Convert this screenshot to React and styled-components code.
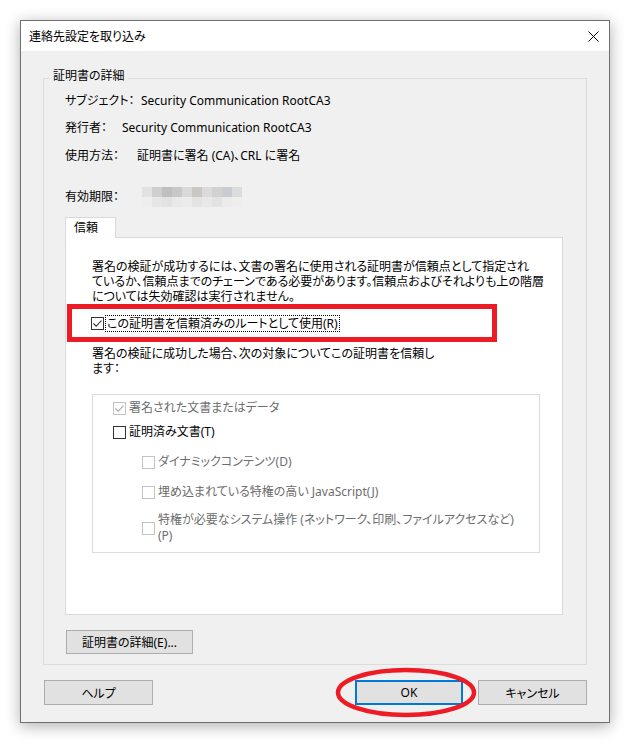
import React from 'react'
import styled, { createGlobalStyle } from 'styled-components'

const GlobalStyle = createGlobalStyle`
  body {
    margin: 0;
    background: #ffffff;
    font-family: "Noto Sans", "Noto Sans CJK JP", sans-serif;
    font-size: 12px;
    color: #000;
  }
  * { box-sizing: border-box; }
`;

const Page = styled.div`
  padding: 20px;
`;

const Window = styled.div`
  width: 590px;
  height: 703px;
  display: flex;
  flex-direction: column;
  background: #f0f0f0;
  border: 1px solid #6f6f6f;
  box-shadow: 0 3px 14px rgba(0, 0, 0, 0.32);
  font-feature-settings: "palt";
`;

const TitleBar = styled.div`
  height: 30px;
  flex: none;
  display: flex;
  align-items: center;
  justify-content: space-between;
  padding: 0 10px 0 8px;
  background: #ffffff;
  font-size: 12px;
`;

const CloseIcon = () => (
  <svg width="11" height="11" viewBox="0 0 11 11">
    <path d="M0.5 0.5 L10.5 10.5 M10.5 0.5 L0.5 10.5" stroke="#000" strokeWidth="1" />
  </svg>
);

const Body = styled.div`
  flex: 1;
  display: flex;
  flex-direction: column;
  padding: 17px 22px 17px 22px;
`;

const GroupBox = styled.fieldset`
  margin: 0;
  min-width: 0;
  border: 1px solid #dcdcdc;
  padding: 0 0 10px 6px;
`;

const Legend = styled.legend`
  padding: 0 3px 4px;
  line-height: 16px;
`;

const GroupContent = styled.div`
  padding: 0 23px 0 15px;
`;

const InfoRow = styled.div`
  display: flex;
  align-items: center;
  line-height: 16px;
  height: ${({ tall }) => (tall ? '20px' : '16px')};
  margin-top: ${({ gap }) => gap}px;
`;

const InfoLabel = styled.span`
  min-width: ${({ w }) => w}px;
`;

const Blur = styled.div`
  display: grid;
  grid-template-columns: repeat(10, 10px);
  grid-auto-rows: 10px;
  margin-left: 1px;
`;

const BlurCell = styled.div`
  background: ${({ c }) => c};
`;

const TabStrip = styled.div`
  margin-top: 10px;
  display: flex;
`;

const Tab = styled.div`
  width: 51px;
  height: 21px;
  margin-bottom: -1px;
  padding: 2px 0 0 8px;
  line-height: 16px;
  background: #ffffff;
  border: 1px solid #d9d9d9;
  border-bottom: none;
  position: relative;
  z-index: 1;
`;

const TabPanel = styled.div`
  background: #ffffff;
  border: 1px solid #d9d9d9;
  padding: 21px 22px 61px 26px;
`;

const Para = styled.p`
  margin: ${({ mt }) => mt}px 0 0;
  line-height: 15px;
  white-space: nowrap;
`;

const Highlight = styled.div`
  margin: 0 0 0 -25px;
  width: 430px;
  height: 38px;
  border: 5px solid #ed1c24;
  padding-left: 19px;
  display: flex;
  align-items: center;
`;

const Box = styled.span`
  flex: none;
  width: 13px;
  height: 13px;
  display: inline-flex;
  align-items: center;
  justify-content: center;
  background: #ffffff;
  border: 1px solid ${({ disabled }) => (disabled ? '#c4c4c4' : '#333333')};
`;

const CheckBox = ({ checked, disabled }) => (
  <Box disabled={disabled}>
    {checked && (
      <svg width="11" height="11" viewBox="0 0 11 11">
        <path
          d="M1.5 5.5 L4.2 8.2 L9.5 2.5"
          fill="none"
          stroke={disabled ? '#a8a8a8' : '#333333'}
          strokeWidth="1.1"
        />
      </svg>
    )}
  </Box>
);

const FocusLabel = styled.span`
  margin-left: 2px;
  padding: 0 1px;
  line-height: 15px;
  outline: 1px dotted #000;
`;

const OptionsBox = styled.div`
  margin-top: 18px;
  width: 448px;
  border: 1px solid #dcdcdc;
  padding: 5px 0 8px 20px;
`;

const Option = styled.div`
  display: flex;
  align-items: center;
  gap: 3px;
  margin-top: ${({ gap }) => gap}px;
  margin-left: ${({ indent }) => (indent ? 29 : 0)}px;
  line-height: 16px;
  color: ${({ disabled }) => (disabled ? '#6d6d6d' : '#000')};
`;

const Button = styled.button`
  width: ${({ w }) => w}px;
  height: ${({ h }) => h || 25}px;
  padding: 0;
  background: #e1e1e1;
  border: 1px solid #adadad;
  border-radius: 0;
  font: inherit;
  font-size: 12px;
  color: #000;
`;

const DetailButton = styled(Button)`
  margin: 15px 0 0 1px;
`;

const Footer = styled.div`
  margin-top: 15px;
  display: flex;
  align-items: center;
  padding: 0 0 0 1px;
`;

const Spacer = styled.div`
  flex: 1;
`;

const OkWrap = styled.div`
  position: relative;
  margin-right: 15px;
`;

const OkButton = styled(Button)`
  border: 2px solid #0078d7;
`;

const Circle = styled.svg`
  position: absolute;
  left: -21px;
  top: -13px;
  pointer-events: none;
`;

const blurTop = ['#e2e2e2', '#cfcfcf', '#c0bfbf', '#c6c9cb', '#d9d9d9', '#cdc7c4', '#dcdadb', '#d3d0d2', '#c9cbd2', '#dcdcde'];
const blurBottom = ['#eeeeee', '#e6e6e6', '#e2e2e2', '#e9e9e9', '#ebebeb', '#e3e3e3', '#e8e8e8', '#e2e2e2', '#ebebeb', '#eeeeee'];

const App = () => {
  return (
    <Page>
      <GlobalStyle />
      <Window>
        <TitleBar>
          <span>連絡先設定を取り込み</span>
          <CloseIcon />
        </TitleBar>
        <Body>
          <GroupBox>
            <Legend>証明書の詳細</Legend>
            <GroupContent>
              <InfoRow gap={5}>
                <InfoLabel w={76}>サブジェクト：</InfoLabel>
                Security Communication RootCA3
              </InfoRow>
              <InfoRow gap={11}>
                <InfoLabel w={57}>発行者：</InfoLabel>
                Security Communication RootCA3
              </InfoRow>
              <InfoRow gap={12}>
                <InfoLabel w={72}>使用方法：</InfoLabel>
                証明書に署名 (CA)、CRL に署名
              </InfoRow>
              <InfoRow gap={23} tall>
                <InfoLabel w={76}>有効期限：</InfoLabel>
                <Blur>
                  {[...blurTop, ...blurBottom].map((c, i) => (
                    <BlurCell key={i} c={c} />
                  ))}
                </Blur>
              </InfoRow>

              <TabStrip>
                <Tab>信頼</Tab>
              </TabStrip>
              <TabPanel>
                <Para mt={0}>
                  署名の検証が成功するには、文書の署名に使用される証明書が信頼点として指定され<br />
                  ているか、信頼点までのチェーンである必要があります。信頼点およびそれよりも上の階層<br />
                  については失効確認は実行されません。
                </Para>
                <Highlight>
                  <CheckBox checked />
                  <FocusLabel>この証明書を信頼済みのルートとして使用(R)</FocusLabel>
                </Highlight>
                <Para mt={4}>
                  署名の検証に成功した場合、次の対象についてこの証明書を信頼し<br />
                  ます：
                </Para>
                <OptionsBox>
                  <Option gap={0} disabled>
                    <CheckBox checked disabled />
                    署名された文書またはデータ
                  </Option>
                  <Option gap={8}>
                    <CheckBox />
                    証明済み文書(T)
                  </Option>
                  <Option gap={14} indent disabled>
                    <CheckBox disabled />
                    ダイナミックコンテンツ(D)
                  </Option>
                  <Option gap={14} indent disabled>
                    <CheckBox disabled />
                    埋め込まれている特権の高い JavaScript(J)
                  </Option>
                  <Option gap={12} indent disabled>
                    <CheckBox disabled />
                    <span>
                      特権が必要なシステム操作 (ネットワーク、印刷、ファイルアクセスなど)<br />
                      (P)
                    </span>
                  </Option>
                </OptionsBox>
              </TabPanel>
              <DetailButton w={127} h={24}>証明書の詳細(E)...</DetailButton>
            </GroupContent>
          </GroupBox>

          <Footer>
            <Button w={109}>ヘルプ</Button>
            <Spacer />
            <OkWrap>
              <OkButton w={108}>OK</OkButton>
              <Circle width="146" height="52" viewBox="0 0 146 52">
                <ellipse cx="72" cy="25.5" rx="68" ry="22.5" fill="none" stroke="#ed1c24" strokeWidth="4.5" />
              </Circle>
            </OkWrap>
            <Button w={109}>キャンセル</Button>
          </Footer>
        </Body>
      </Window>
    </Page>
  )
}

export default App;
